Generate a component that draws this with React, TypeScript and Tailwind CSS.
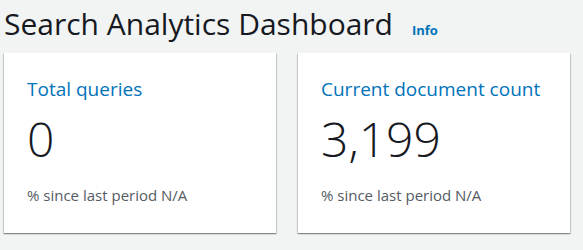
import React from 'react';

type Metric = { label: string; value: string; change: string };

const metrics: Metric[] = [
  { label: 'Total queries', value: '0', change: '% since last period N/A' },
  { label: 'Current document count', value: '3,199', change: '% since last period N/A' },
];

function MetricCard({ metric }: { metric: Metric }) {
  return (
    <div className="w-[272px] h-[180px] bg-white px-[23px] pt-[24px] shadow-[0_1px_1px_0_rgba(0,28,36,0.3),1px_1px_1px_0_rgba(0,28,36,0.15),-1px_1px_1px_0_rgba(0,28,36,0.15)]">
      <div className="text-[19px] leading-[24px] text-[#0073bb]">{metric.label}</div>
      <div className="mt-[10px] text-[48px] leading-[56px] font-light text-[#16191f]">{metric.value}</div>
      <div className="mt-[18px] text-[15px] leading-[20px] text-[#545b64]">{metric.change}</div>
    </div>
  );
}

export default function App() {
  return (
    <div className="min-h-[250px] w-[583px] bg-[#f2f3f3] font-['Open_Sans',sans-serif]">
      <div className="flex items-baseline pl-[4px] pt-[2px] h-[53px]">
        <h1 className="text-[30px] leading-[44px] text-[#16191f]">Search Analytics Dashboard</h1>
        <span className="ml-[19px] text-[13px] font-bold text-[#0073bb]">Info</span>
      </div>
      <div className="flex gap-[22px] pl-[4px]">
        {metrics.map(m => (
          <MetricCard key={m.label} metric={m} />
        ))}
      </div>
    </div>
  );
}
